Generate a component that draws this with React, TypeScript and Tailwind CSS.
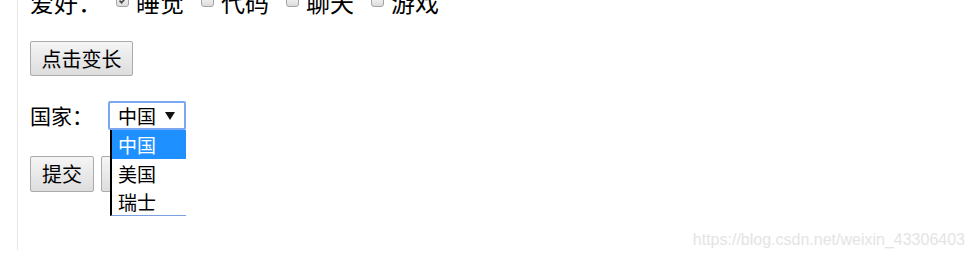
import React from 'react';

const CJK = "font-['Noto_Sans_CJK_SC','Microsoft_YaHei',sans-serif]";

function Box({ checked }: { checked?: boolean }) {
  return (
    <span className="mt-[4px] flex h-[13px] w-[13px] shrink-0 items-center justify-center rounded-[3px] border border-[#a3a3a3] bg-gradient-to-b from-[#fbfbfb] to-[#dcdcdc]">
      {checked && (
        <svg viewBox="0 0 12 12" className="h-[9px] w-[9px]">
          <path d="M2 6.2 L4.8 9 L10 2.8" fill="none" stroke="#4a4a4a" strokeWidth={2.2} />
        </svg>
      )}
    </span>
  );
}

function Btn({ children, w }: { children: React.ReactNode; w: string }) {
  return (
    <button className={`${w} flex h-[36px] items-center justify-center rounded-[2px] border border-[#ababab] bg-gradient-to-b from-[#f5f5f5] to-[#dddddd] text-[20px] leading-none text-black`}>
      {children}
    </button>
  );
}

export default function App() {
  const hobbies = [
    { label: '睡觉', checked: true },
    { label: '代码' },
    { label: '聊天' },
    { label: '游戏' },
  ];
  const countries = ['中国', '美国', '瑞士'];

  return (
    <div className={`relative h-[260px] w-[975px] overflow-hidden bg-white text-black ${CJK}`}>
      <div className="ml-[17px] h-full border-l border-[#e6e6e6] pl-[12px]">
        {/* hobbies row, cut off at the top */}
        <div className="-mt-[10px] flex h-[24px] items-start text-[24px] leading-[24px]">
          <span>爱好：</span>
          <div className="ml-[14px] flex items-start gap-[17px]">
            {hobbies.map(h => (
              <label key={h.label} className="flex items-start gap-[7px]">
                <Box checked={h.checked} />
                <span>{h.label}</span>
              </label>
            ))}
          </div>
        </div>

        <div className="mt-[27px]">
          <button className="flex h-[35px] w-[103px] items-center justify-center rounded-[2px] border border-[#ababab] bg-gradient-to-b from-[#f5f5f5] to-[#dddddd] text-[20px] leading-none text-black">
            点击变长
          </button>
        </div>

        <div className="mt-[25px] flex h-[29px] items-center">
          <span className="w-[63px] text-[21px] leading-none">国家：</span>
          <div className="relative ml-[15px]">
            <div className="flex h-[29px] w-[78px] items-center rounded-[2px] border-2 border-[#7ba7f2] bg-white pl-[8px] text-[19px] leading-none">
              <span>中国</span>
              <svg viewBox="0 0 10 8" className="ml-[9px] h-[8px] w-[10px]">
                <path d="M0 0 H10 L5 8 Z" fill="#111" />
              </svg>
            </div>
            {/* open option list */}
            <div className="absolute left-[2px] top-full z-10 w-[76px] border-b border-l-2 border-b-[#7ba0e0] border-l-black bg-white">
              {countries.map((c, i) => (
                <div
                  key={c}
                  className={`flex items-center pl-[6px] text-[19px] leading-none ${i === 0 ? 'h-[29px] bg-[#1e90ff] text-white' : 'h-[28px] text-black'}`}
                >
                  {c}
                </div>
              ))}
            </div>
          </div>
        </div>

        <div className="mt-[26px] flex gap-[7px]">
          <Btn w="w-[64px]">提交</Btn>
          <Btn w="w-[64px]">重置</Btn>
        </div>
      </div>

      <div className="absolute right-[10px] top-[232px] font-['Liberation_Sans',Arial,sans-serif] text-[16px] leading-none text-[#e4e4e4]">
        https://blog.csdn.net/weixin_43306403
      </div>
    </div>
  );
}
